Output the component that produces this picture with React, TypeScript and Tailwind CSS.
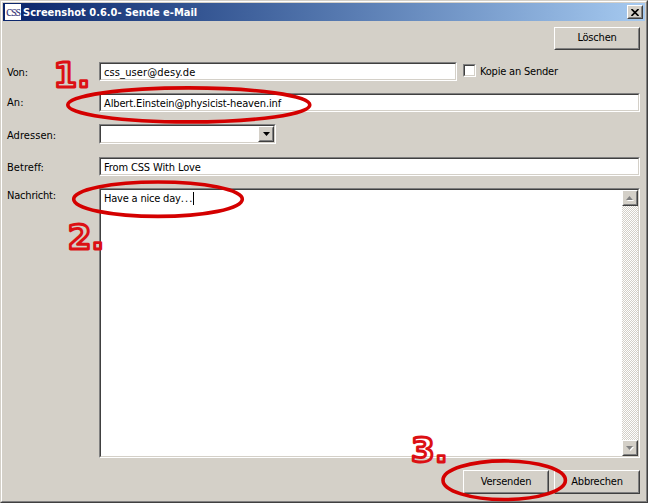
import type { ReactNode } from "react";

const sunken =
  "border border-t-[#808080] border-l-[#808080] border-b-white border-r-white";
const sunkenInner =
  "h-full w-full border border-t-[#404040] border-l-[#404040] border-b-[#d4d0c8] border-r-[#d4d0c8] bg-white";
const raised =
  "border border-t-white border-l-white border-b-[#404040] border-r-[#404040]";
const raisedInner =
  "flex h-full w-full items-center justify-center border border-t-[#d4d0c8] border-l-[#d4d0c8] border-b-[#808080] border-r-[#808080] bg-[#d4d0c8]";

function Field({ className, children }: { className: string; children?: ReactNode }) {
  return (
    <div className={`${sunken} ${className}`}>
      <div className={`${sunkenInner} flex`}>{children}</div>
    </div>
  );
}

function Button({ className, children }: { className: string; children: ReactNode }) {
  return (
    <button className={`${raised} block shrink-0 ${className}`}>
      <span className={raisedInner}>{children}</span>
    </button>
  );
}

function Label({ className, children }: { className: string; children: ReactNode }) {
  return <div className={`w-[92px] shrink-0 leading-[14px] ${className}`}>{children}</div>;
}

function Annotations() {
  return (
    <svg className="pointer-events-none absolute -top-px -left-px" width="648" height="503" fill="none" stroke="#d40000">
      <g strokeWidth="3.6">
        <ellipse cx="188.8" cy="104.9" rx="121" ry="17" />
        <ellipse cx="158" cy="199.2" rx="84.3" ry="17.2" />
        <ellipse cx="504.2" cy="480.2" rx="61.2" ry="19.3" />
      </g>
      <g
        className="font-['DejaVu_Sans'] font-bold tracking-normal"
        fontSize="34"
        strokeWidth="2.9"
        strokeLinejoin="round"
        stroke="#dc1014"
      >
        <text x="53.5" y="87">1.</text>
        <text x="67.7" y="248.6">2.</text>
        <text x="411" y="461.6">3.</text>
      </g>
    </svg>
  );
}

export default function App() {
  return (
    <div className="relative h-[503px] w-[648px] overflow-hidden border border-t-[#d4d0c8] border-l-[#d4d0c8] border-b-[#404040] border-r-[#404040] bg-[#d4d0c8] font-['DejaVu_Sans_Condensed','DejaVu_Sans',sans-serif] text-[11px] tracking-[-0.2px] text-black">
      <div className="flex h-full flex-col border border-t-white border-l-white border-b-[#808080] border-r-[#808080] pl-px">
        <header className="mt-px mr-px flex h-[18px] shrink-0 items-center bg-linear-to-r from-[#0a246a] to-[#a6caf0] pr-[2px] pl-[2px]">
          <span className="flex h-4 w-4 shrink-0 items-center justify-center overflow-hidden bg-white font-['Liberation_Serif',serif] text-[14px] leading-4 tracking-[-1px] text-[#40407c]">
            css
          </span>
          <h1 className="ml-[2px] grow pt-px text-[11px] leading-[18px] font-bold tracking-[0px] whitespace-nowrap text-white">
            Screenshot 0.6.0- Sende e-Mail
          </h1>
          <Button className="h-[14px] w-4">
            <svg width="8" height="7" viewBox="0 0 8 7" stroke="#000" strokeWidth="1.6">
              <path d="M.5 0 7.5 7M7.5 0 .5 7" />
            </svg>
          </Button>
        </header>

        <main className="flex flex-col pt-[6px] pr-[6px] pl-[4px]">
          <div className="flex h-[35px] justify-end">
            <Button className="h-[23px] w-[86px]">Löschen</Button>
          </div>
          <div className="flex h-[31px]">
            <Label className="pt-[4px]">Von:</Label>
            <Field className="h-[19px] w-[358px]">
              <span className="pl-[3px] leading-[17px] tracking-[0.12px]">css_user@desy.de</span>
            </Field>
            <label className="ml-[6px] flex h-[19px] items-start">
              <Field className="mt-[2px] h-[13px] w-[13px]" />
              <span className="ml-[4px] pt-[3px] leading-[14px]">Kopie an Sender</span>
            </label>
          </div>
          <div className="flex h-[31px]">
            <Label className="pt-[3px] tracking-[0.1px]">An:</Label>
            <Field className="h-[19px] grow">
              <span className="pl-[3px] leading-[17px] tracking-[-0.13px]">Albert.Einstein@physicist-heaven.inf</span>
            </Field>
          </div>
          <div className="flex h-[33px]">
            <Label className="pt-[5px] tracking-[0.05px]">Adressen:</Label>
            <Field className="h-[20px] w-[177px]">
              <Button className="ml-auto h-4 w-4">
                <svg width="7" height="4" viewBox="0 0 7 4">
                  <path d="M0 0h7L3.5 4z" fill="#000" />
                </svg>
              </Button>
            </Field>
          </div>
          <div className="flex h-[31px]">
            <Label className="pt-[4px] tracking-[0.05px]">Betreff:</Label>
            <Field className="h-[19px] grow">
              <span className="pl-[3px] leading-[17px] tracking-[-0.13px]">From CSS With Love</span>
            </Field>
          </div>
          <div className="flex h-[282px]">
            <Label className="pt-px">Nachricht:</Label>
            <Field className="h-[270px] grow">
              <div className="flex grow items-start pt-[1px] pl-[3px] leading-[15px]">
                <span>Have a nice day</span>
                <span className="tracking-[1.1px]">...</span>
                <span className="mt-px h-[13px] w-px bg-black" />
              </div>
              <div className="flex w-4 flex-col justify-between bg-[repeating-conic-gradient(#d4d0c8_0_25%,#fff_0_50%)] bg-size-[2px_2px]">
                <Button className="h-4 w-4">
                  <svg width="8" height="5" viewBox="0 0 8 5">
                    <path d="M1 5h7L4.5 1z" fill="#fff" />
                    <path d="M0 4h7L3.5 0z" fill="#808080" />
                  </svg>
                </Button>
                <Button className="h-4 w-4">
                  <svg width="8" height="5" viewBox="0 0 8 5">
                    <path d="M1 1h7L4.5 5z" fill="#fff" />
                    <path d="M0 0h7L3.5 4z" fill="#808080" />
                  </svg>
                </Button>
              </div>
            </Field>
          </div>
          <div className="flex justify-end gap-[5px]">
            <Button className="h-[24px] w-[86px]">Versenden</Button>
            <Button className="h-[24px] w-[86px]">Abbrechen</Button>
          </div>
        </main>
      </div>
      <Annotations />
    </div>
  );
}
